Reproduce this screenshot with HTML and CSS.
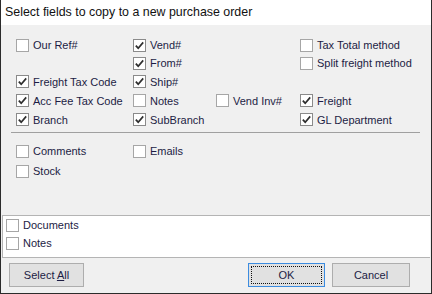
FILE: index.html
```html
<!DOCTYPE html>
<html lang="en">
<head>
    <meta charset="UTF-8">
    <title>Select fields to copy to a new purchase order</title>
    <link rel="stylesheet" href="styles.css">
</head>
<body>

    <div class="dialog">
        <div class="title-bar">Select fields to copy to a new purchase order</div>

        <div class="dialog-body">
            <div class="field-grid">
                <label class="chk c1 r1"><span class="box"></span>Our Ref#</label>
                <label class="chk c2 r1"><span class="box on"></span>Vend#</label>
                <label class="chk c2 r2"><span class="box on"></span>From#</label>
                <label class="chk c2 r3"><span class="box on"></span>Ship#</label>
                <label class="chk c4 r1"><span class="box"></span>Tax Total method</label>
                <label class="chk c4 r2"><span class="box"></span>Split freight method</label>
                <label class="chk c1 r3"><span class="box on"></span>Freight Tax Code</label>
                <label class="chk c1 r4"><span class="box on"></span>Acc Fee Tax Code</label>
                <label class="chk c2 r4"><span class="box"></span>Notes</label>
                <label class="chk c3 r4"><span class="box"></span>Vend Inv#</label>
                <label class="chk c4 r4"><span class="box on"></span>Freight</label>
                <label class="chk c1 r5"><span class="box on"></span>Branch</label>
                <label class="chk c2 r5"><span class="box on"></span>SubBranch</label>
                <label class="chk c4 r5"><span class="box on"></span>GL Department</label>
            </div>

            <div class="separator"></div>

            <div class="extra-grid">
                <label class="chk"><span class="box"></span>Comments</label>
                <label class="chk"><span class="box"></span>Emails</label>
                <label class="chk"><span class="box"></span>Stock</label>
            </div>
        </div>

        <div class="attach-panel">
            <label class="chk"><span class="box"></span>Documents</label>
            <label class="chk"><span class="box"></span>Notes</label>
        </div>

        <div class="button-row">
            <button class="btn">Select <u>A</u>ll</button>
            <div class="spacer"></div>
            <button class="btn focused"><span class="focus-ring">OK</span></button>
            <button class="btn">Cancel</button>
        </div>
    </div>

    <script>
        // checkmarks for the ticked boxes
        document.querySelectorAll('.box.on').forEach(function (box) {
            box.innerHTML = '<svg width="11" height="11" viewBox="0 0 11 11">' +
                '<polyline points="1.8,5.6 4.2,8.2 9.2,2.4" fill="none" stroke="#2e2e2e" stroke-width="1.7"/></svg>';
        });
    </script>
</body>
</html>
```

FILE: styles.css
```css
* {
    box-sizing: border-box;
}

body {
    margin: 0;
    font-family: 'Liberation Sans', Arial, sans-serif;
    font-size: 11px;
    color: #1c1c44;
}

.dialog {
    width: 432px;
    height: 294px;
    background: #f0f0f0;
    border: 1px solid #2b2b2b;
    border-top: none;
    display: flex;
    flex-direction: column;
}

.title-bar {
    height: 25px;
    background: #fff;
    padding: 5px 0 0 4px;
    font-size: 12.4px;
    color: #111;
}

.dialog-body {
    padding: 11px 0 0 15px;
    height: 190px;
}

.field-grid {
    display: grid;
    grid-template-columns: 117px 83px 84px 1fr;
    grid-template-rows: 18px 18px 19px 19px 19px;
}

.c1 { grid-column: 1; }
.c2 { grid-column: 2; }
.c3 { grid-column: 3; }
.c4 { grid-column: 4; }
.r1 { grid-row: 1; }
.r2 { grid-row: 2; }
.r3 { grid-row: 3; }
.r4 { grid-row: 4; }
.r5 { grid-row: 5; }

.chk {
    display: flex;
    align-items: center;
    gap: 4px;
    white-space: nowrap;
}

.box {
    width: 13px;
    height: 13px;
    border: 1px solid #a6a6a6;
    background: #fff;
    display: flex;
    align-items: center;
    justify-content: center;
    flex: none;
}

.box.on {
    border-color: #8a8a8a;
}

.separator {
    margin: 3px 11px 0 -5px;
    border-top: 1px solid #a0a0a0;
}

.extra-grid {
    margin-top: 8px;
    display: grid;
    grid-template-columns: 117px 1fr;
    grid-auto-rows: 20px;
}

.attach-panel {
    margin: 0 1px;
    height: 43px;
    background: #fff;
    border: 1px solid #b4b4b4;
    border-right: none;
    padding: 0 0 0 3px;
    display: grid;
    grid-template-rows: 18px 18px;
}

.button-row {
    display: flex;
    gap: 7px;
    padding: 5px 21px 0 8px;
}

.spacer {
    flex: 1;
}

.btn {
    width: 75px;
    height: 24px;
    background: #e1e1e1;
    border: 1px solid #adadad;
    font-family: 'Liberation Sans', Arial, sans-serif;
    font-size: 11px;
    color: #1c1c44;
    padding: 0;
}

.btn.focused {
    width: 77px;
    border-color: #3c8ce0;
    padding: 2px;
}

.btn + .btn {
    width: 78px;
}

.focus-ring {
    display: flex;
    align-items: center;
    justify-content: center;
    height: 100%;
    border: 1px dotted #111;
}
```
